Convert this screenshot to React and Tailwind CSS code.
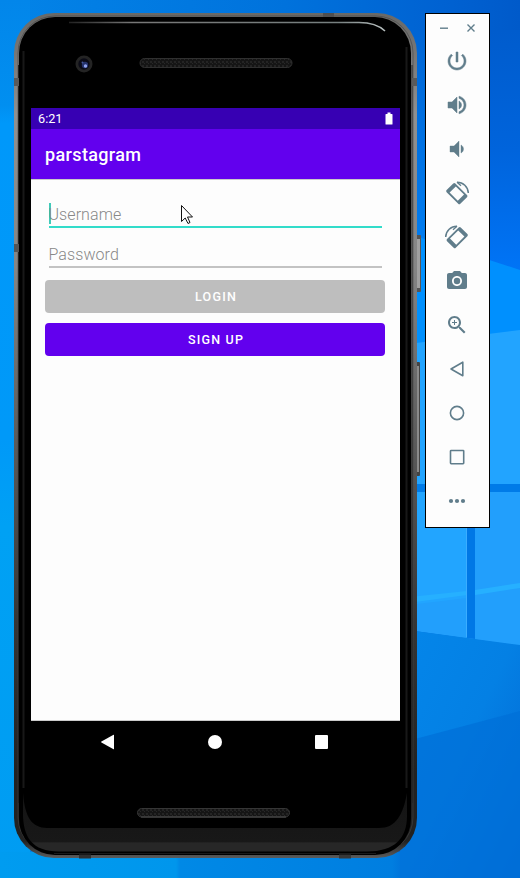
import React from "react";

function Wallpaper() {
  return (
    <svg className="absolute inset-0" width="520" height="878" viewBox="0 0 520 878" aria-hidden="true">
      <defs>
        <linearGradient id="sky" x1="0" y1="0" x2="1" y2="0">
          <stop offset="0" stopColor="#0384e8" />
          <stop offset="0.55" stopColor="#0072dc" />
          <stop offset="0.85" stopColor="#0062d2" />
          <stop offset="1" stopColor="#005aca" />
        </linearGradient>
        <linearGradient id="left" x1="0" y1="0" x2="0" y2="1">
          <stop offset="0" stopColor="#0286ea" />
          <stop offset="0.12" stopColor="#018ff0" />
          <stop offset="0.14" stopColor="#0098fa" />
          <stop offset="0.5" stopColor="#0099f8" />
          <stop offset="0.6" stopColor="#00a1f4" />
          <stop offset="1" stopColor="#009cf2" />
        </linearGradient>
        <linearGradient id="right" x1="0" y1="0" x2="0" y2="1">
          <stop offset="0" stopColor="#005ccd" />
          <stop offset="0.5" stopColor="#0064dc" />
          <stop offset="1" stopColor="#0074f6" />
        </linearGradient>
        <linearGradient id="gap" x1="0" y1="0" x2="0" y2="1">
          <stop offset="0" stopColor="#0065d4" />
          <stop offset="1" stopColor="#007cf0" />
        </linearGradient>
        <linearGradient id="floor" x1="0" y1="0" x2="1" y2="1">
          <stop offset="0" stopColor="#0486ea" />
          <stop offset="0.5" stopColor="#0480e4" />
          <stop offset="1" stopColor="#0266d2" />
        </linearGradient>
        <linearGradient id="base" x1="0" y1="0" x2="1" y2="0">
          <stop offset="0" stopColor="#009cf0" />
          <stop offset="0.44" stopColor="#0096ec" />
          <stop offset="0.45" stopColor="#0089e6" />
          <stop offset="0.98" stopColor="#007ee0" />
          <stop offset="1" stopColor="#0076dc" />
        </linearGradient>
      </defs>
      <rect width="520" height="878" fill="url(#sky)" />
      <rect width="30" height="878" fill="url(#left)" />
      <rect x="426" y="30" width="94" height="240" fill="url(#right)" />
      <path d="M400 30H427V240H400Z" fill="url(#gap)" />
      <path d="M400 231L520 270V345H400Z" fill="#0090fe" />
      <path d="M400 345L520 330V490H400Z" fill="#22a4ff" />
      <path d="M400 484H520V492H400Z" fill="#007be8" />
      <path d="M400 492H520V646L400 629Z" fill="#229ffc" />
      <path d="M400 492H467V598L400 606Z" fill="#22a5ff" />
      <path d="M400 598L467 591V595L400 604ZM475 590L520 583V588L475 595Z" fill="#26b0ff" />
      <path d="M400 629L520 645V878H400Z" fill="url(#floor)" />
      <path d="M400 743L520 711V878H400Z" fill="#0070d8" opacity="0.75" />
      <path d="M467 492H475V639L467 638Z" fill="#0078e6" />
      <path d="M466.5 492V637" stroke="#3badff" />
      <rect y="852" width="400" height="26" fill="url(#base)" />
    </svg>
  );
}

function PhoneShell() {
  return (
    <svg className="absolute left-0 top-0" width="410" height="850" viewBox="0 0 410 850" aria-hidden="true">
      <defs>
        <linearGradient id="rim" x1="0" y1="0" x2="0" y2="1">
          <stop offset="0" stopColor="#696967" />
          <stop offset="0.05" stopColor="#777" />
          <stop offset="0.12" stopColor="#909090" />
          <stop offset="0.3" stopColor="#858585" />
          <stop offset="0.5" stopColor="#5c5c5c" />
          <stop offset="0.72" stopColor="#363636" />
          <stop offset="0.9" stopColor="#222" />
          <stop offset="0.98" stopColor="#222" />
          <stop offset="1" stopColor="#5c5c5c" />
        </linearGradient>
        <linearGradient id="shine" x1="0" y1="0" x2="1" y2="0">
          <stop offset="0" stopColor="#222" />
          <stop offset="0.2" stopColor="#777" />
          <stop offset="0.85" stopColor="#778080" />
          <stop offset="1" stopColor="#b8c0c0" />
        </linearGradient>
        <linearGradient id="chin" x1="0" y1="0" x2="0" y2="1">
          <stop offset="0" stopColor="#141414" />
          <stop offset="0.84" stopColor="#181818" />
          <stop offset="0.85" stopColor="#272727" />
          <stop offset="1" stopColor="#272727" />
        </linearGradient>
        <pattern id="mesh" width="4" height="4" patternUnits="userSpaceOnUse">
          <rect width="4" height="4" fill="#151515" />
          <rect x="0" y="0" width="2" height="2" fill="#242424" />
          <rect x="2" y="2" width="1" height="1" fill="#282828" />
        </pattern>
      </defs>
      <rect x="402" y="222" width="5" height="57" rx="1" fill="#555" />
      <rect x="403" y="226" width="3" height="49" fill="#a0a0a0" />
      <rect x="401" y="349" width="5" height="114" rx="1" fill="#444" />
      <rect x="402" y="353" width="3" height="106" fill="#8a8a8a" />
      <rect x="0" y="0" width="403" height="845" rx="40" fill="url(#rim)" />
      <rect x="4" y="3" width="395" height="838" rx="37" fill="none" stroke="#444" opacity="0.6" />
      <rect x="5" y="4" width="392" height="838" rx="36" fill="#000" />
      <path d="M9 780C11 805 18 814.5 33 815H345L365 815C382 815 389 802 393 780V803C393 825 381 838.5 353 838.5H45C18 838.5 9 824 9 800Z" fill="url(#chin)" />
      <path d="M40 840.5H362" stroke="#1a1a1a" />
      <path d="M55 9.5H345Q362 9.5 371 18" fill="none" stroke="url(#shine)" strokeWidth="1.5" />
      <path d="M9.5 38V775M392.5 34V775" stroke="#181818" strokeWidth="2" />
      <path d="M4.5 52V790M398 52V790" stroke="#222" />
      <rect x="0" y="65" width="5" height="8" fill="#5a5a5a" />
      <rect x="0" y="231" width="5" height="8" fill="#555" />
      <rect x="398" y="65" width="5" height="8" fill="#5a5a5a" />
      <rect x="309" y="0" width="11" height="4" fill="#505050" />
      <rect x="65" y="841.5" width="12" height="4" fill="#303030" />
      <rect x="325" y="841.5" width="12" height="4" fill="#383838" />
      <circle cx="70" cy="51" r="8.5" fill="#242424" />
      <circle cx="70" cy="51" r="5.7" fill="#0b0b16" />
      <circle cx="71" cy="52" r="3.2" fill="#24326c" />
      <circle cx="71.5" cy="53" r="1.7" fill="#92a3ed" />
      <circle cx="68.5" cy="49.5" r="1" fill="#445697" />
      <rect x="126" y="45.5" width="152" height="9" rx="4.5" fill="url(#mesh)" stroke="#303030" />
      <rect x="123.5" y="795.5" width="152" height="8.5" rx="4.2" fill="url(#mesh)" stroke="#363636" />
      <path d="M127 804H272" stroke="#505050" />
    </svg>
  );
}

function Field({ label, active }) {
  return (
    <div
      className={
        active
          ? "flex h-[25px] items-start border-b-2 border-[#32dcca]"
          : "flex h-[40px] items-start border-b-2 border-[#c3c3c3] pt-[15px]"
      }
    >
      {active && <span className="-mr-[2px] h-[21px] w-[2px] shrink-0 bg-[#10bda8]/80" />}
      <span className="mt-[2px] whitespace-nowrap text-[16px] leading-[20px] font-light tracking-[0.08px] text-[#888888]">{label}</span>
    </div>
  );
}

function AppScreen() {
  return (
    <div className="flex h-[613px] w-[369px] flex-col bg-[#fdfdfd]">
      <div className="flex h-[21px] items-center justify-between bg-[#3700b3] pr-[7px] pl-[7px]">
        <span className="pt-px text-[12.7px] leading-none text-white">6:21</span>
        <svg width="8" height="13" viewBox="0 0 8 13" fill="#fff">
          <path d="M2.5 0.5H5.5V2H7Q7.5 2 7.5 2.5V12Q7.5 12.5 7 12.5H1Q.5 12.5.5 12V2.5Q.5 2 1 2H2.5Z" />
        </svg>
      </div>
      <div className="flex h-[50px] items-center bg-[#6200ee] pl-[14px]">
        <span className="pt-px text-[18px] leading-none font-medium tracking-[0.36px] text-white">parstagram</span>
      </div>
      <div className="flex grow flex-col border-t border-b border-[#cacaca] pt-[23px] pr-[15px] pl-[14px]">
        <div className="pr-[3px] pl-[3.5px]">
          <Field label="Username" active />
          <Field label="Password" />
        </div>
        <button className="mt-[11.5px] h-[33px] rounded-[4px] bg-[#bebebe] pt-[2px] pl-[2px] text-[12.5px] leading-none font-medium tracking-[1.25px] text-white">
          LOGIN
        </button>
        <button className="mt-[10px] h-[33px] rounded-[4px] bg-[#6200ee] pt-[2px] pl-[2px] text-[12.5px] leading-none font-medium tracking-[1.2px] text-white">
          SIGN UP
        </button>
      </div>
    </div>
  );
}

function Phone() {
  return (
    <div className="relative flex h-[846px] w-[403px] shrink-0 flex-col pt-[95px] pl-[17px]">
      <PhoneShell />
      <div className="relative">
        <AppScreen />
        <div className="flex h-[42px] w-[369px] items-center justify-between pr-[72px] pl-[69px]">
          <svg width="15" height="16" viewBox="0 0 15 16" fill="#fff">
            <path d="M13.6.7Q14 .5 14 1V15Q14 15.5 13.6 15.3L1.4 8.5Q.8 8 1.4 7.5Z" />
          </svg>
          <span className="h-[13.5px] w-[13.5px] rounded-full bg-white" />
          <span className="h-[13.5px] w-[13.5px] rounded-[1px] bg-white" />
        </div>
      </div>
    </div>
  );
}

function RotateShape() {
  return (
    <>
      <g transform="translate(-0.2 0.6) rotate(45 12 12)">
        <path
          fillRule="evenodd"
          d="M3.8 5.8H20.2Q21.7 5.8 21.7 7.3V16.7Q21.7 18.2 20.2 18.2H3.8Q2.3 18.2 2.3 16.7V7.3Q2.3 5.8 3.8 5.8ZM6.2 7.6V16.4H17.8V7.6Z"
        />
      </g>
      <path d="M12 1.2A11.2 11.2 0 0 1 23.3 12" fill="none" stroke="currentColor" strokeWidth="1.5" />
      <path d="M12 1.2L16 4.8" stroke="currentColor" strokeWidth="1.3" />
    </>
  );
}

const TOOLS = [
  {
    name: "Power",
    art: <path d="M13 3h-2v10h2V3zm4.83 2.17l-1.42 1.42C17.99 7.86 19 9.81 19 12c0 3.87-3.13 7-7 7s-7-3.13-7-7c0-2.19 1.01-4.14 2.58-5.42L6.17 5.17C4.23 6.82 3 9.26 3 12c0 4.97 4.03 9 9 9s9-4.03 9-9c0-2.74-1.23-5.18-3.17-6.83z" stroke="currentColor" strokeWidth="0.5" />,
  },
  {
    name: "Volume up",
    art: <path d="M3 9v6h4l5 5V4L7 9H3zm13.5 3c0-1.77-1.02-3.29-2.5-4.03v8.05c1.48-.73 2.5-2.25 2.5-4.02zM14 3.23v2.06c2.89.86 5 3.54 5 6.71s-2.11 5.85-5 6.71v2.06c4.01-.91 7-4.49 7-8.77s-2.99-7.86-7-8.77z" stroke="currentColor" strokeWidth="0.5" />,
  },
  {
    name: "Volume down",
    art: <path d="M18.5 12c0-1.77-1.02-3.29-2.5-4.03v8.05c1.48-.73 2.5-2.25 2.5-4.02zM5 9v6h4l5 5V4L9 9H5z" stroke="currentColor" strokeWidth="0.4" />,
  },
  { name: "Rotate left", art: <RotateShape /> },
  {
    name: "Rotate right",
    art: (
      <g transform="matrix(-1 0 0 1 24 0)">
        <RotateShape />
      </g>
    ),
  },
  {
    name: "Screenshot",
    art: (
      <>
        <circle cx="12" cy="12" r="3.2" />
        <path d="M9 2L7.17 4H4c-1.1 0-2 .9-2 2v12c0 1.1.9 2 2 2h16c1.1 0 2-.9 2-2V6c0-1.1-.9-2-2-2h-3.17L15 2H9zm3 15c-2.76 0-5-2.24-5-5s2.24-5 5-5 5 2.24 5 5-2.24 5-5 5z" />
      </>
    ),
  },
  {
    name: "Zoom",
    art: <path d="M15.5 14h-.79l-.28-.27C15.41 12.59 16 11.11 16 9.5 16 5.91 13.09 3 9.5 3S3 5.91 3 9.5 5.91 16 9.5 16c1.61 0 3.09-.59 4.23-1.57l.27.28v.79l5 4.99L20.49 19l-4.99-5zm-6 0C7.01 14 5 11.99 5 9.5S7.01 5 9.5 5 14 7.01 14 9.5 11.99 14 9.5 14zm2.5-4h-2v2H9v-2H7V9h2V7h1v2h2v1z" />,
  },
  { name: "Back", art: <path d="M17.8 5.2V18.8L6 12Z" fill="none" stroke="currentColor" strokeWidth="1.6" strokeLinejoin="round" /> },
  { name: "Home", art: <circle cx="12" cy="12" r="6.6" fill="none" stroke="currentColor" strokeWidth="1.6" /> },
  { name: "Overview", art: <rect x="5.5" y="5.5" width="13.2" height="13.2" rx="0.6" fill="none" stroke="currentColor" strokeWidth="1.6" /> },
  {
    name: "More",
    art: (
      <>
        <circle cx="6" cy="12" r="2.1" />
        <circle cx="12" cy="12" r="2.1" />
        <circle cx="18" cy="12" r="2.1" />
      </>
    ),
  },
];

function Toolbar() {
  return (
    <div className="ml-[8px] flex h-[515px] w-[65px] shrink-0 flex-col border border-black bg-[#fdfdfd] text-[#607d8b]">
      <div className="flex h-[25px] items-center justify-between pt-[3px] pr-[14px] pl-[14px]">
        <svg width="8" height="8" viewBox="0 0 8 8" stroke="currentColor" strokeWidth="1.4">
          <path d="M0 4.2H8" />
        </svg>
        <svg width="8" height="8" viewBox="0 0 8 8" stroke="currentColor" strokeWidth="1.4">
          <path d="M.5.5L7.5 7.5M7.5.5L.5 7.5" />
        </svg>
      </div>
      {TOOLS.map((tool) => (
        <div key={tool.name} className="flex h-[44px] shrink-0 items-center pl-[19px]">
          <svg className="overflow-visible" width="24" height="24" viewBox="0 0 24 24" fill="currentColor">
            {tool.art}
          </svg>
        </div>
      ))}
    </div>
  );
}

function Pointer() {
  return (
    <svg className="absolute top-[204px] left-[180px]" width="15" height="22" viewBox="0 0 15 22">
      <path d="M1.5 1.5V17.5L5.2 14L8 19.5L10 18.5L7.5 13H12.5Z" fill="#fff" stroke="#111" strokeWidth="1" />
    </svg>
  );
}

export default function App() {
  return (
    <div className="relative flex h-[878px] w-[520px] items-start overflow-hidden pt-[13px] pl-[14px] font-[Roboto,sans-serif]">
      <Wallpaper />
      <Phone />
      <div className="relative flex">
        <Toolbar />
      </div>
      <Pointer />
    </div>
  );
}
